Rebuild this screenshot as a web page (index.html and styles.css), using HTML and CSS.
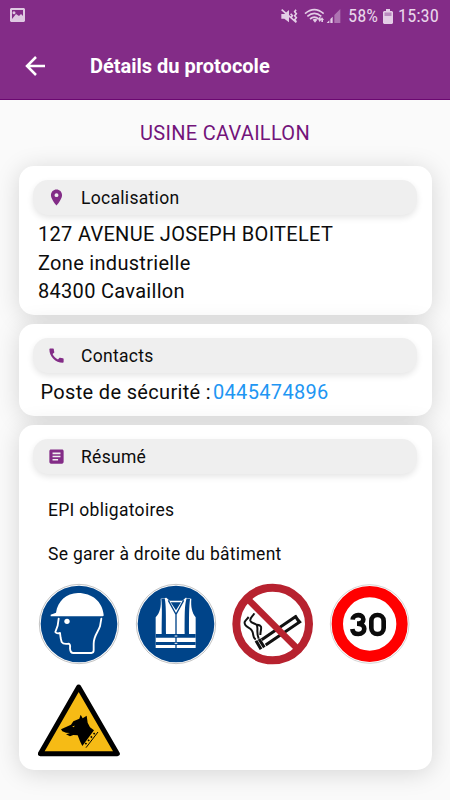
FILE: index.html
```html
<!DOCTYPE html>
<html lang="fr">
<head>
<meta charset="utf-8">
<title>Détails du protocole</title>
<link rel="stylesheet" href="styles.css">
</head>
<body>
<header class="header">
  <div class="status">
    <svg class="status-photo" viewBox="0 0 15 14"><path fill="#dfc8e2" fill-rule="evenodd" d="M1 0h13l1 1v12l-1 1H1l-1-1V1zM2 2v9l4-5 3 2 2-2 2 2V2zM4 3.300a1.500 1.500 0 1 1 0 3a1.500 1.500 0 1 1 0-3z"/></svg>
    <div class="status-right">
      <svg class="status-icons" viewBox="0 0 186 54"><g fill="#e3cde6"><path d="M1 21h9L24 9v37L10 35H1z"/><path d="M95 38q7-6 14 0l-7 9z"/><path d="M111 37h3v-6h5v6h3l-6 8zM121 45v-6h-4l6-8 6 8h-3v6z"/><path d="M137 48l8-8v8zM148 48V36l7-7v19z"/><path opacity=".45" d="M160 48V24l18-18v42z"/></g><g fill="none" stroke="#e3cde6" stroke-width="5"><path d="M72 20q28-24 56 0M79 28q21-18 42 0M87 36q13-11 26 0M2 8l44 38M29 20l5 6-4 6M45 8l-4 6 5 6-5 6 5 6-5 6 5 6"/></g></svg>
      <span class="status-battery">58%</span>
      <svg class="status-cell" viewBox="0 0 10 15"><path fill="#e3cde6" d="M3 0h4v2h2l1 1v11l-1 1H1l-1-1V3l1-1h2z"/><path fill="#b98abf" d="M1.500 3.500h7v3.500h-7z"/></svg>
      <span class="status-time">15:30</span>
    </div>
  </div>
  <div class="appbar">
    <svg class="back" viewBox="0 0 20 20"><path fill="none" stroke="#fff" stroke-width="2.500" d="M20 10H2M11 1L2 10l9 9"/></svg>
    <h1 class="title">Détails du protocole</h1>
  </div>
</header>
<main class="content">
  <h2 class="site">USINE CAVAILLON</h2>
  <section class="card card-location">
    <div class="pill">
      <svg class="pill-icon" viewBox="0 0 24 24"><path d="M12 2C8.130 2 5 5.130 5 9c0 5.250 7 13 7 13s7-7.750 7-13c0-3.870-3.130-7-7-7zm0 9.500a2.500 2.500 0 1 1 0-5 2.500 2.500 0 0 1 0 5z"/></svg>
      <h3 class="pill-label">Localisation</h3>
    </div>
    <address class="address">127 AVENUE JOSEPH BOITELET<br>Zone industrielle<br>84300 Cavaillon</address>
  </section>
  <section class="card card-contact">
    <div class="pill">
      <svg class="pill-icon" viewBox="0 0 24 24"><path d="M20.010 15.380c-1.230 0-2.420-.2-3.530-.56-.35-.12-.74-.03-1.010.24l-1.570 1.970c-2.830-1.350-5.480-3.900-6.890-6.830l1.950-1.660c.27-.28.35-.67.24-1.020-.37-1.110-.56-2.300-.56-3.530 0-.54-.45-.99-.99-.99H4.190C3.650 3 3 3.240 3 3.990 3 13.280 10.730 21 20.010 21c.71 0 .99-.63.99-1.180v-3.450c0-.54-.45-.99-.99-.99z"/></svg>
      <h3 class="pill-label">Contacts</h3>
    </div>
    <p class="contact"><span>Poste de sécurité :</span><span class="phone">0445474896</span></p>
  </section>
  <section class="card card-summary">
    <div class="pill">
      <svg class="pill-icon" viewBox="0 0 24 24"><path d="M19 3H5c-1.100 0-2 .9-2 2v14c0 1.100.9 2 2 2h14c1.100 0 2-.9 2-2V5c0-1.100-.9-2-2-2zm-5 14H7v-2h7v2zm3-4H7v-2h10v2zm0-4H7V7h10v2z"/></svg>
      <h3 class="pill-label">Résumé</h3>
    </div>
    <p class="note">EPI obligatoires</p>
    <p class="note">Se garer à droite du bâtiment</p>
    <div class="signs">
      <svg class="sign" viewBox="24 24 246 246"><circle cx="147" cy="147" r="119" fill="#fff" stroke="#a5a5a5" stroke-width="2"/><circle cx="147" cy="147" r="115" fill="#004489"/><path fill="#fff" d="M62 124v-5l16-6c5-34 31-59 66-59 43 0 73 26 77 65q1 5-4 5z"/><circle cx="111" cy="139" r="8" fill="#fff"/><path fill="none" stroke="#fff" stroke-width="5.500" stroke-linejoin="round" stroke-linecap="round" d="M86 131L83 152L76 171Q80 177 90 174L92 189L95 201Q100 209 116 206Q122 208 120 220Q121 234 130 234H184Q191 234 191 226V206C191 182 205 170 210 154L214 131"/></svg>
      <svg class="sign" viewBox="30 24 246 246"><circle cx="153" cy="147" r="119" fill="#fff" stroke="#a5a5a5" stroke-width="2"/><circle cx="153" cy="147" r="115" fill="#004489"/><path fill="#fff" d="M107 71l17-3 10 9h38l10-9 17 3c-2 24 2 42 13 56v92H92v-92c13-14 17-32 15-56z"/><path fill="#004489" d="M137 82h31l-15 24zM109 72l10-2c4 20 4 40 4 108h-13c0-50 2-80-1-106zM185 70l10 2c-3 25-3 50-3 106h-13c0-68 0-88 6-108zM92 177h120v11H92zM92 201h120v9H92z"/><path fill="none" stroke="#004489" stroke-width="4" d="M130 76l23 42 23-42M153 118v101"/><path stroke="#fff" stroke-width="3" d="M149 183h8M149 205h8"/></svg>
      <svg class="sign" viewBox="30 24 246 246"><circle cx="152" cy="147" r="109" fill="#fff"/><g fill="none" stroke="#111"><path stroke-width="9" d="M119 194L220 125l13 16-102 69M219 122l15 23M102 197l15 26M111 192l16 25"/><path stroke-width="6" d="M97 115c-5 10-14 13-12 22 2 8 14 8 18 12 8 8-2 21 7 42M80 126c-9 11-16 14-10 24 5 8 15 8 20 17 7 11 0 20 11 27M105 149c20 2 10 15 10 31"/></g><circle cx="152" cy="147" r="109" fill="none" stroke="#b7222f" stroke-width="24"/><path stroke="#b7222f" stroke-width="20" d="M77 72l150 150"/></svg>
      <svg class="sign" viewBox="27 24 246 246"><circle cx="149" cy="147" r="118" fill="#fff" stroke="#bcbcbc" stroke-width="2"/><circle cx="149" cy="147" r="97" fill="#fff" stroke="#f00" stroke-width="34"/><path fill="none" stroke="#0b0b0b" stroke-width="14" d="M98 134c1-18 32-18 32-1q0 13-19 13c30 0 27 31 4 31-12 0-17-5-18-15"/><rect x="154" y="120" width="37" height="57" rx="18" fill="none" stroke="#0b0b0b" stroke-width="14"/></svg>
      <svg class="sign" viewBox="84 27 246 246"><path d="M206 36L322 236H91z" fill="#f6bb15" stroke="#000" stroke-width="15" stroke-linejoin="round"/><path d="M153 163L183 149L190 139L208 131L212 119L218 130L230 122L233 143L240 157L252 166L217 213L210 199L203 181L190 180L180 184L168 178L180 174L168 173L157 169z"/><path fill="#f6bb15" d="M187 154l8-2-5 5z"/><path fill="none" stroke="#000" stroke-width="3" d="M264 171l-36 47"/><path fill="none" stroke="#000" stroke-width="5" stroke-dasharray="5 8" d="M254 174l-32 39"/></svg>
    </div>
  </section>
</main>
</body>
</html>
```

FILE: styles.css
```css
* { box-sizing: border-box; }
body { margin: 0; width: 450px; height: 800px; overflow: hidden; background: #fafafa; color: #0c0c0c; font-family: Roboto, sans-serif; }
h1, h2, h3, p { margin: 0; font-weight: 400; }
svg { display: block; flex: none; }
.header { height: 100px; background: #832c87; border-bottom: 1px solid #6b0871; }
.status { height: 32px; display: flex; justify-content: space-between; padding: 0 11px 0 10px; }
.status-photo { width: 15px; height: 14px; margin-top: 8px; }
.status-right { display: flex; align-items: center; color: #e8d6ea; font: 18.500px/32px "Roboto Condensed", Roboto, sans-serif; }
.status-icons { width: 62px; height: 18px; margin-right: 5px; }
.status-battery { width: 30px; white-space: nowrap; }
.status-cell { width: 10px; height: 15px; margin: 0 5px; }
.status-time { width: 41px; white-space: nowrap; }
.appbar { height: 67px; display: flex; align-items: center; padding-left: 25px; }
.back { width: 20px; height: 20px; }
.title { margin-left: 45px; color: #fff; font-size: 20px; font-weight: 700; line-height: 24px; }
.content { padding: 21px 18.500px 0; }
.site { height: 24px; text-align: center; color: #73147a; font-size: 20px; line-height: 24px; letter-spacing: .3px; }
.card { margin-bottom: 9px; padding: 14px 14.500px 0; border-radius: 15px; background: #fff; box-shadow: 0 3px 25px rgba(0,0,0,.15); }
.card-location { height: 149px; margin-top: 21px; }
.card-contact { height: 92px; }
.card-summary { height: 345px; }
.pill { height: 35px; display: flex; align-items: center; padding-left: 14px; border-radius: 15px; background: #efefef; box-shadow: 0 3px 6px rgba(0,0,0,.1); }
.pill-icon { width: 19px; height: 19px; fill: #832c87; }
.pill-label { margin-left: 15px; font-size: 17.500px; line-height: 24px; letter-spacing: .3px; }
.address { margin: 5px 0 0 5px; font-size: 20px; line-height: 28.700px; font-style: normal; letter-spacing: .3px; }
.contact { display: flex; gap: 2px; margin: 7px 0 0 7.500px; font-size: 20px; line-height: 24px; letter-spacing: .33px; }
.phone { color: #2196f3; }
.note { margin: 24px 0 0 15px; font-size: 17.500px; line-height: 20px; letter-spacing: .3px; }
.signs { display: grid; grid-template-columns: repeat(4, 82px); gap: 19px 15px; margin: 19px 0 0 5px; }
.sign { width: 82px; height: 82px; }
.pill + .note { margin-top: 26px; }
```
